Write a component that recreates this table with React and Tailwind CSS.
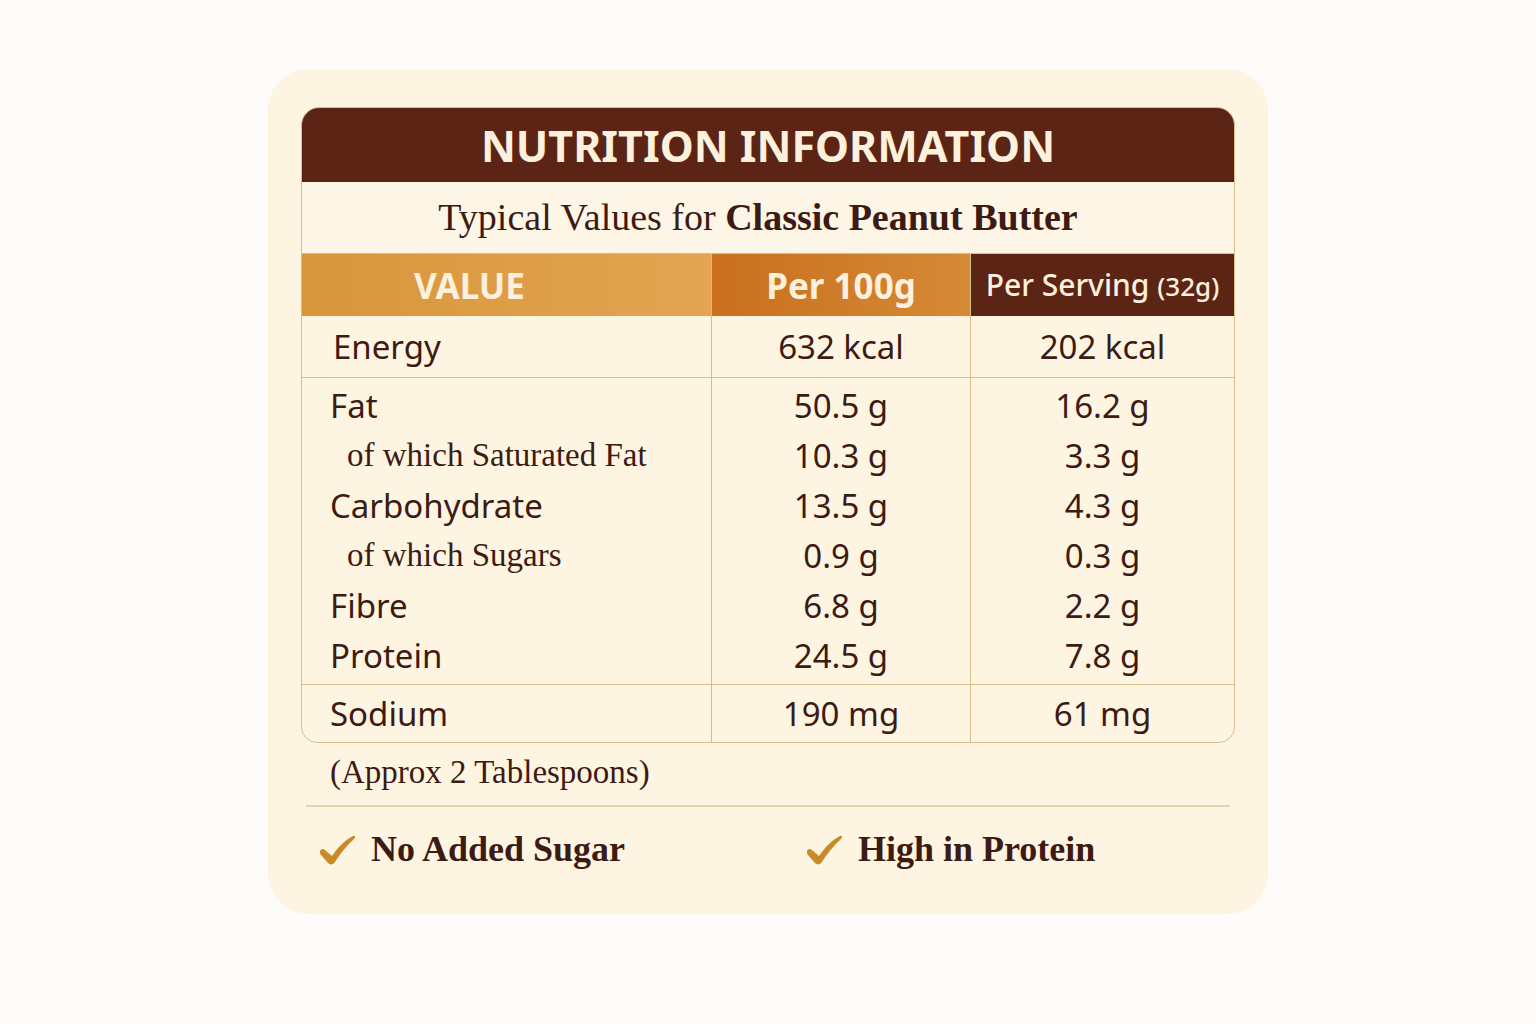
import React from 'react';

const sans = { fontFamily: '"Noto Sans", "Open Sans", sans-serif' };
const serif = { fontFamily: '"Liberation Serif", "DejaVu Serif", serif' };

const groupRows = [
  { label: 'Fat', a: '50.5 g', b: '16.2 g' },
  { label: 'of which Saturated Fat', a: '10.3 g', b: '3.3 g', sub: true },
  { label: 'Carbohydrate', a: '13.5 g', b: '4.3 g' },
  { label: 'of which Sugars', a: '0.9 g', b: '0.3 g', sub: true },
  { label: 'Fibre', a: '6.8 g', b: '2.2 g' },
  { label: 'Protein', a: '24.5 g', b: '7.8 g' },
];

// brush style tick
const Check = () => (
  <svg width="40" height="32" viewBox="0 0 40 32" className="shrink-0">
    <path
      d="M3 19 C3 16 6 15 8 17 L15 23 C21 14 28 7 36 3 C38 2 39 4 37 6 C29 13 23 21 18 29 C16 32 13 32 11 30 L4 22 C3 21 3 20 3 19 Z"
      fill="#c98a28"
    />
  </svg>
);

export default function App() {
  return (
    <div className="min-h-screen w-full bg-[#fdfcfa] flex justify-center pt-[69px] text-[#3d1a12]">
      <div className="w-[1000px] h-[845px] rounded-[40px] bg-[#fdf5e2] px-[33px] pt-[38px]">
        <div className="w-[934px] border border-[#d8bd8c] rounded-t-[18px] rounded-b-[16px] overflow-hidden">
          {/* title */}
          <div className="h-[74px] bg-[#5b2414] flex items-center justify-center">
            <span style={sans} className="text-[43px] font-bold text-[#fdf0dc] leading-none">NUTRITION INFORMATION</span>
          </div>
          <div className="h-[72px] bg-[#fdf6e6] flex items-center justify-center pr-[20px] border-b border-[#d8bd8c]">
            <span style={serif} className="text-[38px] text-[#3d1a12]">
              Typical Values for <b>Classic Peanut Butter</b>
            </span>
          </div>
          {/* column headers */}
          <div className="grid grid-cols-[410px_259px_1fr] h-[62px]" style={sans}>
            <div className="bg-gradient-to-r from-[#d8963b] to-[#e3a551] flex items-center justify-center pr-[74px] border-r border-[#d8bd8c]">
              <span className="text-[35px] font-bold text-[#fdf0dc] leading-none">VALUE</span>
            </div>
            <div className="bg-gradient-to-r from-[#c96f1d] to-[#d58a36] flex items-center justify-center border-r border-[#d8bd8c]">
              <span className="text-[35px] font-bold text-[#fdf0dc] leading-none">Per 100g</span>
            </div>
            <div className="bg-[#5b2414] flex items-center justify-center">
              <span className="text-[30px] font-medium text-[#fdf0dc] leading-none">
                Per Serving <span className="text-[26px]">(32g)</span>
              </span>
            </div>
          </div>
          {/* energy */}
          <div className="grid grid-cols-[410px_259px_1fr] h-[62px] border-b border-[#d8bd8c] text-[33px]" style={sans}>
            <div className="flex items-center pl-[31px] border-r border-[#d8bd8c]">Energy</div>
            <div className="flex items-center justify-center border-r border-[#d8bd8c]">632 kcal</div>
            <div className="flex items-center justify-center">202 kcal</div>
          </div>
          {/* grouped rows */}
          <div className="grid grid-cols-[410px_259px_1fr] border-b border-[#d8bd8c] text-[33px]">
            <div className="border-r border-[#d8bd8c] py-[3px]">
              {groupRows.map((r) => (
                <div
                  key={r.label}
                  className={`h-[50px] flex items-center ${r.sub ? 'pl-[45px] text-[33px]' : 'pl-[28px]'}`}
                  style={r.sub ? serif : sans}
                >
                  {r.label}
                </div>
              ))}
            </div>
            <div className="border-r border-[#d8bd8c] py-[3px]" style={sans}>
              {groupRows.map((r) => (
                <div key={r.label} className="h-[50px] flex items-center justify-center">{r.a}</div>
              ))}
            </div>
            <div className="py-[3px]" style={sans}>
              {groupRows.map((r) => (
                <div key={r.label} className="h-[50px] flex items-center justify-center">{r.b}</div>
              ))}
            </div>
          </div>
          {/* sodium */}
          <div className="grid grid-cols-[410px_259px_1fr] h-[57px] text-[33px]" style={sans}>
            <div className="flex items-center pl-[28px] border-r border-[#d8bd8c]">Sodium</div>
            <div className="flex items-center justify-center border-r border-[#d8bd8c]">190 mg</div>
            <div className="flex items-center justify-center">61 mg</div>
          </div>
        </div>

        <div style={serif} className="text-[33px] pl-[29px] mt-[4px] h-[52px] flex items-center">(Approx 2 Tablespoons)</div>
        <div className="mx-[5px] mt-[6px] border-t-2 border-[#e6d2ae]" />
        <div className="flex items-center mt-[15px] pl-[16px]" style={serif}>
          <div className="flex items-center gap-[14px] w-[487px]">
            <Check />
            <span className="text-[36px] font-bold">No Added Sugar</span>
          </div>
          <div className="flex items-center gap-[14px]">
            <Check />
            <span className="text-[36px] font-bold">High in Protein</span>
          </div>
        </div>
      </div>
    </div>
  );
}
